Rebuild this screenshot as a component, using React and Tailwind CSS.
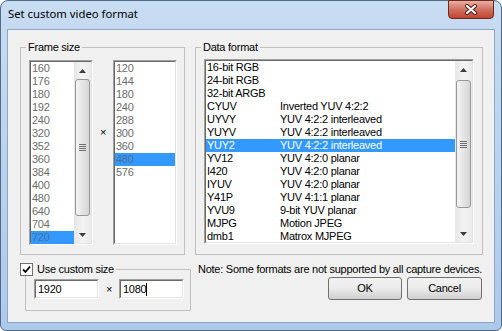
import React from 'react';

const widths = ['160', '176', '180', '192', '240', '320', '352', '360', '384', '400', '480', '640', '704', '720'];
const heights = ['120', '144', '180', '240', '288', '300', '360', '480', '576'];
const formats = [
  ['16-bit RGB', ''],
  ['24-bit RGB', ''],
  ['32-bit ARGB', ''],
  ['CYUV', 'Inverted YUV 4:2:2'],
  ['UYVY', 'YUV 4:2:2 interleaved'],
  ['YUYV', 'YUV 4:2:2 interleaved'],
  ['YUY2', 'YUV 4:2:2 interleaved'],
  ['YV12', 'YUV 4:2:0 planar'],
  ['I420', 'YUV 4:2:0 planar'],
  ['IYUV', 'YUV 4:2:0 planar'],
  ['Y41P', 'YUV 4:1:1 planar'],
  ['YVU9', '9-bit YUV planar'],
  ['MJPG', 'Motion JPEG'],
  ['dmb1', 'Matrox MJPEG'],
];

function Sunken({ className = '', children }) {
  return (
    <div className={`border border-t-[#a0a0a0] border-l-[#a0a0a0] border-r-white border-b-white ${className}`}>
      <div className="h-full w-full border border-t-[#696969] border-l-[#696969] border-r-[#e3e3e3] border-b-[#e3e3e3] bg-white flex">
        {children}
      </div>
    </div>
  );
}

function Arrow({ down }) {
  return (
    <div className="h-[17px] flex items-center justify-center">
      <svg width="7" height="4" viewBox="0 0 7 4">
        <path d={down ? 'M0 0h7L3.5 4z' : 'M0 4h7L3.5 0z'} fill="#3c3c3c" />
      </svg>
    </div>
  );
}

function Scrollbar({ thumbClass }) {
  return (
    <div className="w-[17px] shrink-0 flex flex-col bg-gradient-to-r from-[#e6e6e6] via-[#f3f3f3] to-[#ebebeb]">
      <Arrow />
      <div className={`mx-[1px] rounded-[3px] border border-[#979797] bg-gradient-to-r from-[#f4f4f4] to-[#d5d5d5] flex items-center justify-center ${thumbClass}`}>
        <svg width="7" height="7" viewBox="0 0 7 7">
          <path d="M0 0.5h7M0 2.5h7M0 4.5h7M0 6.5h7" stroke="#6f6f6f" strokeWidth="1" />
        </svg>
      </div>
      <div className="flex-1" />
      <Arrow down />
    </div>
  );
}

function SizeList({ items, selected, scroll }) {
  return (
    <Sunken className="w-[64px] h-[185px]">
      <div className="flex-1 flex flex-col">
        {items.map((v) => (
          <div
            key={v}
            className={`h-[13px] leading-[13px] pl-[1px] ${v === selected ? 'bg-[#3399ff] text-[#4f6f99]' : 'text-[#6d6d6d]'}`}
          >
            {v}
          </div>
        ))}
      </div>
      {scroll && <Scrollbar thumbClass="h-[137px]" />}
    </Sunken>
  );
}

function Button({ children, className = '' }) {
  return (
    <div className={`h-[23px] rounded-[3px] border border-[#707070] bg-gradient-to-b from-[#f2f2f2] via-[#ebebeb] to-[#cfcfcf] flex items-center justify-center ${className}`}>
      {children}
    </div>
  );
}

export default function App() {
  return (
    <div className="w-[502px] h-[331px] overflow-hidden bg-white text-[11px] tracking-[-0.25px] text-black font-['Liberation_Sans',Arial,sans-serif]">
      <div className="w-full h-full rounded-t-[8px] rounded-b-[6px] border border-[#4f6b8c] bg-gradient-to-b from-[#c8dcf2] via-[#b9d2ee] to-[#adc9ea] flex flex-col">
        {/* Title bar */}
        <div className="h-[28px] flex items-start">
          <div className="flex-1 pl-[7px] pt-[5px] text-[11.3px] tracking-normal font-['Noto_Sans',sans-serif]">Set custom video format</div>
          <div className="mr-[7px] -mt-[1px] w-[46px] h-[19px] rounded-b-[4px] border border-[#6a2a22] bg-gradient-to-b from-[#eab0a3] via-[#d0705f] to-[#c0442f] flex items-center justify-center">
            <svg width="14" height="11" viewBox="0 0 14 11">
              <path d="M3 2l8 7M11 2l-8 7" stroke="#4a1a14" strokeWidth="4" strokeLinecap="round" />
              <path d="M3 2l8 7M11 2l-8 7" stroke="#ffffff" strokeWidth="2.2" strokeLinecap="round" />
            </svg>
          </div>
        </div>

        {/* Client area */}
        <div className="mx-[6px] mb-[7px] flex-1 border border-[#8ea6c1] bg-[#f0f0f0] flex flex-col">
          <div className="flex mt-[11px] ml-[12px]">
            <fieldset className="w-[165px] h-[214px] border border-[#c0c0c0] pl-[8px] pt-[6px]">
              <legend className="-ml-[3px] px-[2px] leading-[13px]">Frame size</legend>
              <div className="flex">
                <SizeList items={widths} selected="720" scroll />
                <div className="w-[20px] pt-[66px] text-center leading-[13px]">×</div>
                <SizeList items={heights} selected="480" />
              </div>
            </fieldset>

            <fieldset className="ml-[10px] w-[288px] h-[214px] border border-[#c0c0c0] pl-[8px] pt-[5px]">
              <legend className="-ml-[3px] px-[2px] leading-[13px]">Data format</legend>
              <Sunken className="w-[270px] h-[185px]">
                <div className="flex-1 flex flex-col">
                  {formats.map(([code, desc]) => (
                    <div
                      key={code}
                      className={`h-[13px] leading-[13px] pl-[1px] flex ${code === 'YUY2' ? 'bg-[#3399ff] text-white' : ''}`}
                    >
                      <span className="w-[73px]">{code}</span>
                      <span>{desc}</span>
                    </div>
                  ))}
                </div>
                <Scrollbar thumbClass="mt-[2px] h-[128px]" />
              </Sunken>
            </fieldset>
          </div>

          <div className="flex mt-[8px]">
            <fieldset className="ml-[17px] w-[167px] h-[48px] border border-[#c0c0c0] pl-[8px] pt-[3px]">
              <legend className="-ml-[14px] pr-[2px] leading-[13px] flex items-center gap-[4px]">
                <span className="w-[13px] h-[13px] border border-[#707070] bg-white flex items-center justify-center">
                  <svg width="9" height="9" viewBox="0 0 9 9">
                    <path d="M1 4.5l2.5 2.5L8 1.5" fill="none" stroke="#000" strokeWidth="1.8" />
                  </svg>
                </span>
                <span>Use custom size</span>
              </legend>
              <div className="flex items-center">
                <Sunken className="w-[65px] h-[20px]">
                  <span className="pl-[2px] leading-[16px]">1920</span>
                </Sunken>
                <div className="w-[20px] text-center">×</div>
                <Sunken className="w-[65px] h-[20px]">
                  <span className="pl-[2px] leading-[16px]">1080</span>
                  <span className="mt-[2px] w-[1px] h-[13px] bg-black" />
                </Sunken>
              </div>
            </fieldset>

            <div className="ml-[7px] flex-1 mr-[12px] flex flex-col">
              <div className="leading-[13px] whitespace-nowrap">Note: Some formats are not supported by all capture devices.</div>
              <div className="mt-[1px] flex justify-end gap-[5px]">
                <Button className="w-[74px] border-[#3c7fb1]">OK</Button>
                <Button className="w-[75px]">Cancel</Button>
              </div>
            </div>
          </div>
        </div>
      </div>
    </div>
  );
}
